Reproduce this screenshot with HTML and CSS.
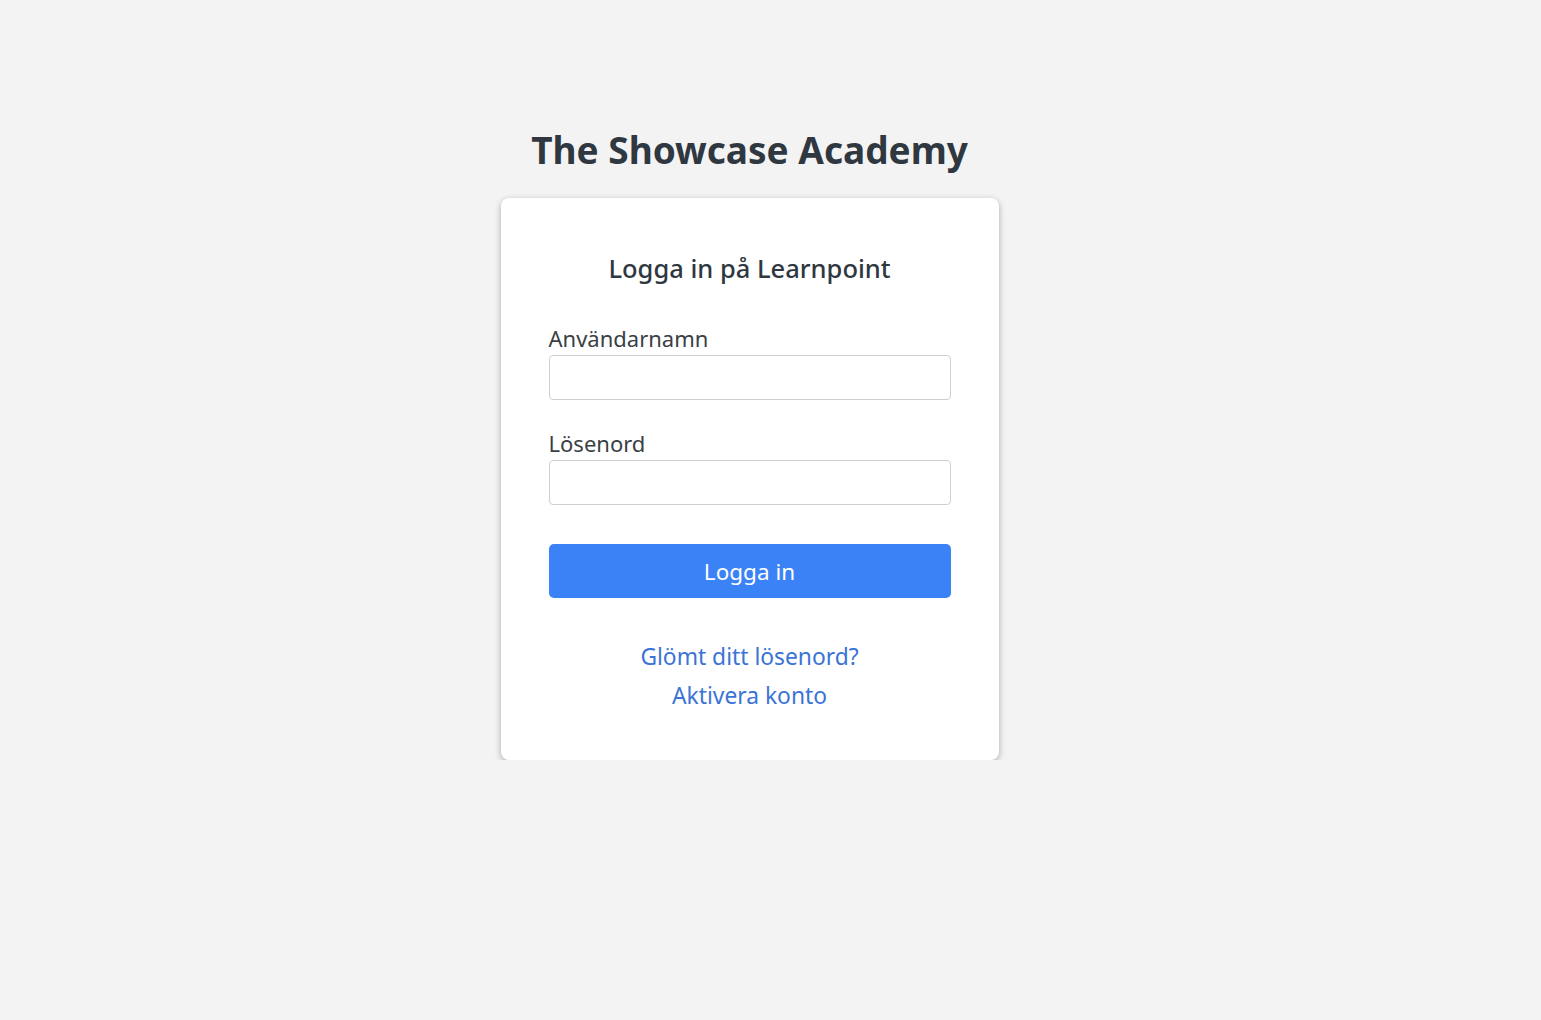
FILE: index.html
```html
<!DOCTYPE html>
<html lang="sv">
<head>
    <meta charset="UTF-8">
    <meta name="viewport" content="width=device-width, initial-scale=1.0">
    <title>The Showcase Academy - Logga in</title>
    <link rel="stylesheet" href="styles.css">
</head>
<body>
    <h1 class="site-title">The Showcase Academy</h1>
    <div class="login-card">
        <h2 class="login-heading">Logga in på Learnpoint</h2>
        <form class="login-form">
            <label class="field-label" for="username">Användarnamn</label>
            <input type="text" id="username" class="field-input">
            <label class="field-label" for="password">Lösenord</label>
            <input type="password" id="password" class="field-input">
            <button type="submit" class="login-button">Logga in</button>
        </form>
        <div class="login-links">
            <a href="#">Glömt ditt lösenord?</a>
            <a href="#">Aktivera konto</a>
        </div>
    </div>
</body>
</html>
```

FILE: styles.css
```css
body {
    background-color: #f3f3f3;
    margin: 0;
    padding-top: 124px;
    padding-right: 42px;
    display: flex;
    flex-direction: column;
    align-items: center;
    font-family: "Noto Sans", "Open Sans", sans-serif;
    color: #343a40;
}
.site-title {
    margin: 0 0 22px 0;
    font-size: 37px;
    font-weight: 700;
    line-height: 52px;
    color: #2f3741;
}
.login-card {
    width: 498px;
    box-sizing: border-box;
    background-color: #ffffff;
    border-radius: 8px;
    box-shadow: 0 2px 6px rgba(0, 0, 0, 0.3);
    padding: 53px 48px 47px 48px;
}
.login-heading {
    margin: 0 0 40px 0;
    text-align: center;
    font-size: 25.5px;
    font-weight: 500;
    line-height: 34px;
    color: #2f3741;
}
.login-form {
    display: flex;
    flex-direction: column;
}
.field-label {
    font-size: 22px;
    line-height: 27px;
    padding-bottom: 3px;
    color: #3a3f45;
}
.field-input {
    height: 45px;
    box-sizing: border-box;
    border: 1px solid #cfcfcf;
    border-radius: 4px;
    margin-bottom: 30px;
    font-size: 18px;
    padding: 6px 12px;
}
.login-button {
    margin-top: 9px;
    height: 54px;
    border: none;
    border-radius: 5px;
    background-color: #3b82f6;
    color: #ffffff;
    font-family: inherit;
    font-size: 22.5px;
    cursor: pointer;
}
.login-links {
    margin-top: 41px;
    display: flex;
    flex-direction: column;
    align-items: center;
    gap: 4px;
}
.login-links a {
    color: #3b73d6;
    text-decoration: none;
    font-size: 22.8px;
    line-height: 35px;
}
```
